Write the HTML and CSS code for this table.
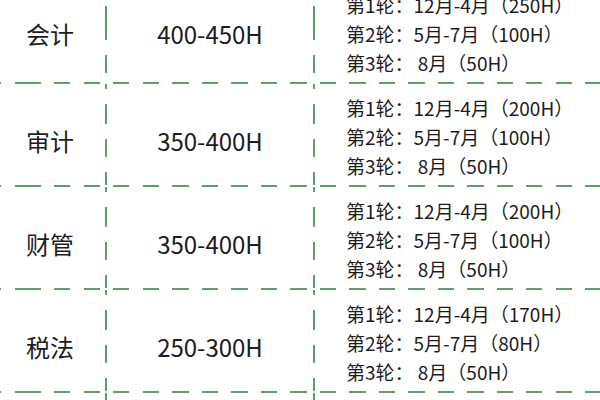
FILE: index.html
```html
<!DOCTYPE html>
<html lang="zh-CN">
<head>
<meta charset="utf-8">
<title>学习时间安排</title>
<link rel="stylesheet" href="styles.css">
</head>
<body>
<div class="table">
  <div class="row first">
    <div class="c1">会计</div><div class="vl"></div>
    <div class="c2">400-450H</div><div class="vl"></div>
    <div class="c3"><p>第1轮：12月-4月（250H）</p><p>第2轮：5月-7月（100H）</p><p>第3轮： 8月（50H）</p></div>
  </div>
  <div class="hl"></div>
  <div class="row">
    <div class="c1">审计</div><div class="vl"></div>
    <div class="c2">350-400H</div><div class="vl"></div>
    <div class="c3"><p>第1轮：12月-4月（200H）</p><p>第2轮：5月-7月（100H）</p><p>第3轮： 8月（50H）</p></div>
  </div>
  <div class="hl"></div>
  <div class="row">
    <div class="c1">财管</div><div class="vl"></div>
    <div class="c2">350-400H</div><div class="vl"></div>
    <div class="c3"><p>第1轮：12月-4月（200H）</p><p>第2轮：5月-7月（100H）</p><p>第3轮： 8月（50H）</p></div>
  </div>
  <div class="hl"></div>
  <div class="row">
    <div class="c1">税法</div><div class="vl"></div>
    <div class="c2">250-300H</div><div class="vl"></div>
    <div class="c3"><p>第1轮：12月-4月（170H）</p><p>第2轮：5月-7月（80H）</p><p>第3轮： 8月（50H）</p></div>
  </div>
  <div class="hl"></div>
  <div class="row tail">
    <div class="c1"></div><div class="vl"></div>
    <div class="c2"></div><div class="vl"></div>
    <div class="c3"></div>
  </div>
</div>
</body>
</html>
```
FILE: styles.css
```css
html, body {
  margin: 0;
  padding: 0;
  background: #ffffff;
  overflow: hidden;
}
body {
  width: 600px;
  height: 400px;
  font-family: "Noto Sans CJK SC", "Noto Sans", sans-serif;
  color: #1c1c1c;
}
.table {
  display: flex;
  flex-direction: column;
}
.row {
  display: flex;
  height: 101px;
}
.row.first {
  height: 82px;
}
.row.tail {
  height: 7px;
}
.c1, .c2 {
  display: flex;
  align-items: flex-end;
  justify-content: center;
  padding-bottom: 29px;
  font-size: 24px;
  line-height: 30px;
  box-sizing: border-box;
}
.row.first .c1, .row.first .c2 {
  padding-bottom: 33px;
}
.row.tail .c1, .row.tail .c2 {
  padding-bottom: 0;
}
.c1 {
  width: 105px;
  padding-right: 5px;
}
.c2 {
  width: 206px;
}
.c3 {
  flex: 1;
  display: flex;
  flex-direction: column;
  justify-content: flex-end;
  padding-left: 31px;
  padding-bottom: 5px;
  font-size: 19px;
  line-height: 29px;
}
.row.tail .c3 {
  padding-bottom: 0;
}
.c3 p {
  margin: 0;
  white-space: pre;
}
.vl {
  width: 2px;
  flex: none;
  background: repeating-linear-gradient(to bottom, #5f9d6f 0 18px, transparent 18px 33px);
  background-position: 0 22px;
}
.hl {
  height: 2px;
  background: repeating-linear-gradient(to right, #5f9d6f 0 16px, transparent 16px 29.5px);
  background-position: 25px 0;
}
```
